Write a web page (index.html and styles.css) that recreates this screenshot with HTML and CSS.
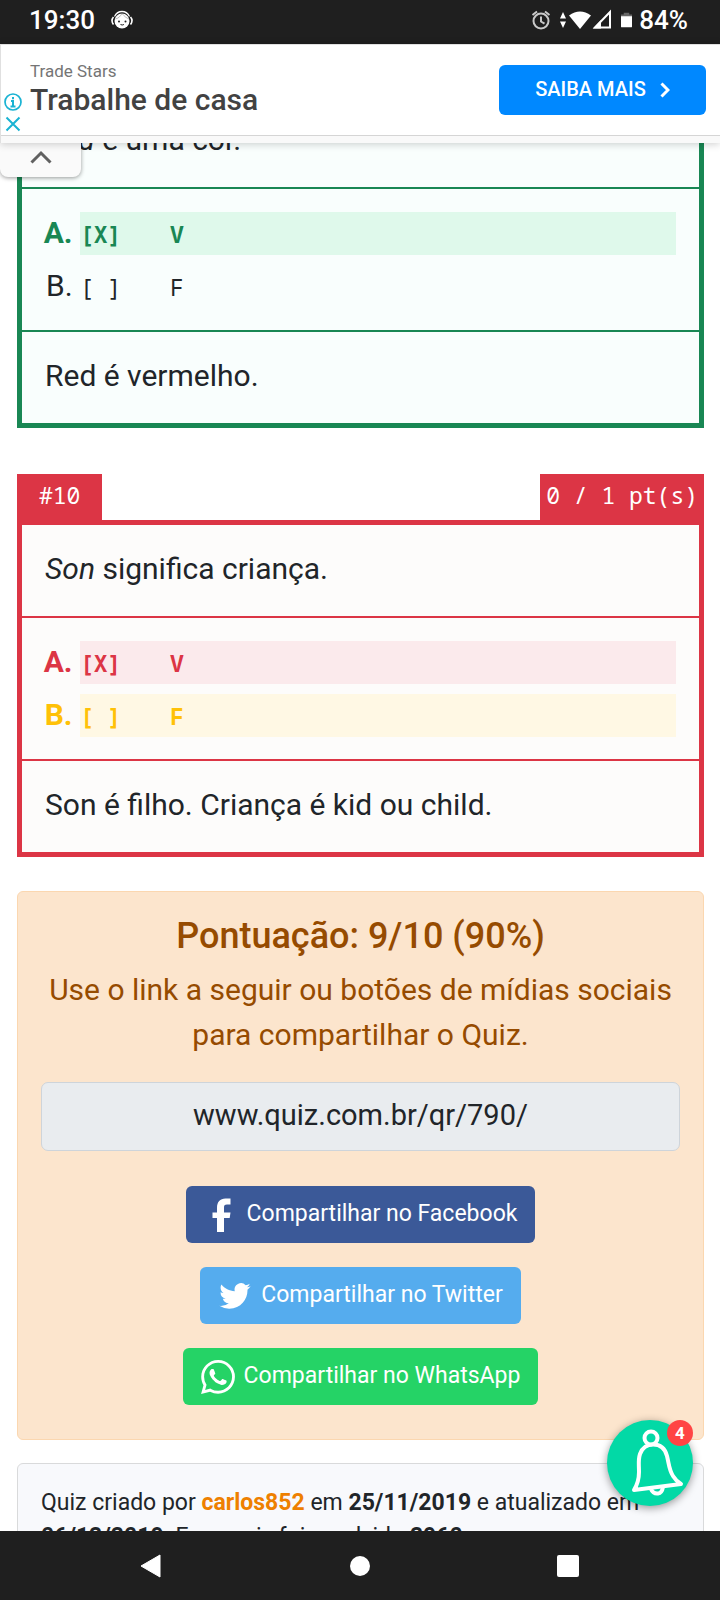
FILE: index.html
```html
<!DOCTYPE html>
<html lang="pt-BR">
<head>
<meta charset="utf-8">
<meta name="viewport" content="width=device-width, initial-scale=1">
<title>Quiz</title>
<link rel="stylesheet" href="styles.css">
</head>
<body>
<div class="screen">
  <header class="status">
    <div class="status-side">
      <time class="clock">19:30</time>
      <svg class="icon-face" viewBox="0 0 22 20" aria-hidden="true"><circle cx="11" cy="11" r="7.500" fill="#fff"/><path d="M2.500 14.500Q-.5 10.500 2.500 7M19.500 14.500Q22.500 10.500 19.500 7" fill="none" stroke="#fff" stroke-width="1.600"/><path d="M3.500 6.500Q6 1.500 11 1.500T18.500 6.500" fill="none" stroke="#fff" stroke-width="1.300"/><path d="M4.500 9C8 8 9.500 6 11 3.500 13.500 6.500 15.500 8 18 9" fill="none" stroke="#1f1f1f" stroke-width=".3"/><circle cx="8" cy="11.500" r="1" fill="#1f1f1f"/><circle cx="14.500" cy="11.500" r="1" fill="#1f1f1f"/><path d="M9.500 14.500q1.700 1 3.400 0" fill="none" stroke="#1f1f1f"/></svg>
    </div>
    <div class="status-side">
      <svg class="icon-alarm" viewBox="0 0 20 20" aria-hidden="true"><g fill="none" stroke="#c9c9c9" stroke-width="2"><circle cx="10" cy="11" r="7.500"/><path d="M1.500 5 6 1.500M18.500 5 14 1.500M10 6.500V11.500l3.500 2.200"/></g></svg>
      <svg class="icon-signal" viewBox="0 0 54 22" aria-hidden="true"><path d="M2 9.500 5 3l3 6.500zM2 12.500 5 19l3-6.500z" fill="#fff"/><path d="M11 6.500Q22 -1.500 33 6.500L22 20z" fill="#fff"/><path d="M37 18.500 52 3v15.500z" fill="none" stroke="#fff" stroke-width="2"/><path d="M35 19.500 43 11v8.500z" fill="#fff"/></svg>
      <svg class="icon-battery" viewBox="0 0 12 18" aria-hidden="true"><path d="M3 1h6v2h3v3H0V3h3z" fill="#666"/><path d="M0 5h12v11a1 1 0 0 1-1 1H1a1 1 0 0 1-1-1z" fill="#fff"/></svg>
      <span class="percent">84%</span>
    </div>
  </header>

  <aside class="ad">
    <div class="ad-marks">
      <svg class="ad-mark" viewBox="0 0 20 20" aria-hidden="true"><circle cx="10" cy="10" r="8" fill="none" stroke="#1ab3d3" stroke-width="1.700"/><path d="M10 5v2.200M8 9h2v5.500M7.500 14.500h5" fill="none" stroke="#1ab3d3" stroke-width="2"/></svg>
      <svg class="ad-mark" viewBox="0 0 20 20" aria-hidden="true"><path d="M3.500 3.500l13 13M16.500 3.500l-13 13" stroke="#1ab3d3" stroke-width="2"/></svg>
    </div>
    <div class="ad-copy">
      <p class="ad-brand">Trade Stars</p>
      <p class="ad-title">Trabalhe de casa</p>
    </div>
    <a class="ad-button" href="#">SAIBA MAIS
      <svg class="ad-arrow" viewBox="0 0 10 16" aria-hidden="true"><path d="M1.500 1.500 8 8l-6.500 6.500" fill="none" stroke="#fff" stroke-width="3"/></svg>
    </a>
  </aside>

  <div class="stage">
    <button class="collapse" type="button" aria-label="Recolher">
      <svg class="collapse-icon" viewBox="0 0 22 14" aria-hidden="true"><path d="M1.500 12.500 11 3l9.500 9.500" fill="none" stroke="#616161" stroke-width="3"/></svg>
    </button>

    <main class="page">
      <section class="question right">
        <div class="card">
          <p class="part"><em>Red</em> é uma cor.</p>
          <ol class="part answers" type="A">
            <li class="answer good"><span class="mono choice"><span class="tick">[X]</span>V</span></li>
            <li class="answer"><span class="mono choice"><span class="tick">[ ]</span>F</span></li>
          </ol>
          <p class="part">Red é vermelho.</p>
        </div>
      </section>

      <section class="question wrong">
        <div class="tabs mono">
          <span class="tab">#10</span>
          <span class="tab points">0 / 1 pt(s)</span>
        </div>
        <div class="card">
          <p class="part"><em>Son</em> significa criança.</p>
          <ol class="part answers" type="A">
            <li class="answer bad"><span class="mono choice"><span class="tick">[X]</span>V</span></li>
            <li class="answer missed"><span class="mono choice"><span class="tick">[ ]</span>F</span></li>
          </ol>
          <p class="part">Son é filho. Criança é kid ou child.</p>
        </div>
      </section>

      <section class="score">
        <h2 class="score-title">Pontuação: 9/10 (90%)</h2>
        <p class="score-text">Use o link a seguir ou botões de mídias sociais para compartilhar o Quiz.</p>
        <input class="link-box" type="text" readonly value="www.quiz.com.br/qr/790/" aria-label="Link do Quiz">
        <div class="shares">
          <a class="share facebook" href="#"><svg class="share-icon" viewBox="0 0 34 34" aria-hidden="true"><path d="M13 34V20H8.500v-5.500H13V10c0-6 3-9.500 8.500-9.500h5V6.500h-3.500c-2.500 0-3 1.200-3 3.200v4.800h6.500l-.8 5.500H20v14z" fill="#fff"/></svg><span class="share-label">Compartilhar no Facebook</span></a>
          <a class="share twitter" href="#"><svg class="share-icon" viewBox="-1 -1 26 26" aria-hidden="true"><path d="M23.950 4.570a10 10 0 0 1-2.820.77 4.960 4.960 0 0 0 2.160-2.720c-.95.550-2 .950-3.130 1.180a4.920 4.920 0 0 0-8.380 4.480C7.690 8.100 4.070 6.130 1.640 3.160a4.820 4.820 0 0 0-.67 2.480c0 1.710.87 3.210 2.190 4.100a4.900 4.900 0 0 1-2.230-.62v.06a4.920 4.920 0 0 0 3.950 4.830 5 5 0 0 1-2.210.08 4.940 4.940 0 0 0 4.600 3.420A9.870 9.870 0 0 1 0 19.540a13.990 13.990 0 0 0 7.550 2.210c9.050 0 14-7.500 14-13.980 0-.21 0-.42-.02-.63a9.940 9.940 0 0 0 2.460-2.550z" fill="#fff"/></svg><span class="share-label">Compartilhar no Twitter</span></a>
          <a class="share whatsapp" href="#"><svg class="share-icon" viewBox="0 0 24 24" aria-hidden="true"><path d="M17.470 14.380c-.3-.15-1.760-.87-2.030-.97-.27-.1-.47-.15-.67.150-.2.300-.77.970-.94 1.160-.17.200-.35.220-.64.080-.3-.15-1.260-.46-2.390-1.480-.88-.79-1.480-1.760-1.650-2.060-.17-.3-.02-.46.130-.61.130-.13.300-.35.450-.52.150-.17.200-.3.300-.5.100-.2.050-.37-.03-.52-.07-.15-.67-1.610-.92-2.210-.24-.58-.49-.5-.67-.51l-.57-.01c-.2 0-.52.070-.79.370-.27.300-1.040 1.020-1.040 2.480s1.070 2.880 1.210 3.070c.15.200 2.100 3.200 5.080 4.490.71.310 1.260.49 1.690.63.710.23 1.360.19 1.870.12.570-.09 1.760-.72 2.010-1.410.25-.69.250-1.290.17-1.410-.07-.13-.27-.2-.57-.35m-5.420 7.400h0a9.870 9.870 0 0 1-5.030-1.380l-.36-.21-3.740.98 1-3.650-.24-.37a9.860 9.860 0 0 1-1.510-5.260c0-5.450 4.440-9.880 9.890-9.880a9.830 9.830 0 0 1 9.880 9.890c0 5.450-4.440 9.880-9.890 9.880m8.410-18.300A11.820 11.820 0 0 0 12.050 0C5.500 0 .16 5.340.16 11.890c0 2.100.55 4.140 1.590 5.950L.06 24l6.300-1.650a11.880 11.880 0 0 0 5.690 1.450c6.550 0 11.890-5.340 11.890-11.890a11.820 11.820 0 0 0-3.480-8.430z" fill="#fff"/></svg><span class="share-label">Compartilhar no WhatsApp</span></a>
        </div>
      </section>

      <footer class="credits">Quiz criado por <a class="author" href="#">carlos852</a> em <b>25/11/2019</b> e atualizado em <b>06/12/2019</b>. Esse quiz foi resolvido <b>2960</b> vezes.</footer>
    </main>

    <button class="bell" type="button" aria-label="Notificações">
      <svg class="bell-icon" viewBox="0 0 86 86" aria-hidden="true"><g fill="none" stroke="#fff" stroke-width="4" stroke-linejoin="round"><circle cx="44" cy="18" r="6.500"/><path d="M27 70Q32 62 32 52C32 44 31 40 33 34 36 26 41 24.500 46 24.500 53 24.500 58 28 60 36 62 44 62 50 66 56Q69 61 74 64z"/><path d="M44 69Q46 74 51 73.500 55 73 56 67"/></g></svg>
      <span class="badge">4</span>
    </button>
  </div>

  <nav class="system-nav">
    <button class="nav-key" type="button" aria-label="Voltar"><svg class="nav-icon" viewBox="0 0 24 24" aria-hidden="true"><path d="M1 12 20 1v22z" fill="#fff" stroke="#fff" stroke-linejoin="round"/></svg></button>
    <button class="nav-key" type="button" aria-label="Início"><svg class="nav-icon" viewBox="0 0 24 24" aria-hidden="true"><circle cx="12" cy="12" r="10" fill="#fff"/></svg></button>
    <button class="nav-key" type="button" aria-label="Recentes"><svg class="nav-icon" viewBox="0 0 24 24" aria-hidden="true"><rect x="1" y="1" width="22" height="22" rx="2" fill="#fff"/></svg></button>
  </nav>
</div>
</body>
</html>
```
FILE: styles.css
```css
* { box-sizing: border-box; }

body {
  margin: 0;
  background: #fff;
  color: #212529;
  font-family: Roboto, "Liberation Sans", sans-serif;
  font-size: 30px;
  line-height: 45px;
}

p, h2, ol { margin: 0; }
button { border: 0; padding: 0; font: inherit; }
a { text-decoration: none; }
svg { display: block; flex: none; }

.mono {
  font-family: "Noto Sans Mono", "DejaVu Sans Mono", monospace;
  font-size: 23px;
}

.screen {
  display: flex;
  flex-direction: column;
  height: 100vh;
  overflow: hidden;
}

/* Status bar */
.status {
  display: flex;
  justify-content: space-between;
  align-items: center;
  height: 44px;
  padding: 0 32px 4px 29px;
  background: #1f1f1f;
  color: #fff;
  font-size: 26px;
  font-weight: 500;
  line-height: 40px;
}
.status-side { display: flex; align-items: center; }
.icon-face { width: 22px; height: 20px; margin-left: 16px; }
.icon-alarm { width: 20px; height: 20px; }
.icon-signal { width: 54px; height: 22px; margin-left: 7px; }
.icon-battery { width: 11px; height: 18px; margin: 0 7px 0 9px; }

/* Ad banner */
.ad {
  display: flex;
  align-items: center;
  height: 99px;
  padding: 0 14px 9px 2px;
  border-top: 1px solid #e0e0e0;
  border-left: 1px solid #e0e0e0;
  background: linear-gradient(#fff 90px, #d5d5d5 90px, #d5d5d5 91px, #f9f9f9 91px);
  box-shadow: 0 1px 8px rgba(0, 0, 0, .2);
  z-index: 1;
}
.ad-marks { align-self: flex-end; display: grid; gap: 2px; width: 20px; }
.ad-mark { width: 20px; height: 20px; }
.ad-copy { flex: 1; padding: 0 0 2px 7px; }
.ad-brand { color: #757575; font-size: 17px; line-height: 22px; }
.ad-title { color: #424242; font-size: 30px; font-weight: 500; line-height: 36px; }
.ad-button {
  display: flex;
  align-items: center;
  justify-content: center;
  gap: 14px;
  width: 207px;
  height: 50px;
  border-radius: 6px;
  background: #0088ff;
  color: #fff;
  font-size: 20px;
  font-weight: 500;
}
.ad-arrow { width: 10px; height: 16px; }

/* Scrolled page */
.stage { position: relative; flex: 1; min-height: 0; overflow: hidden; }
.collapse {
  position: absolute;
  top: 0;
  left: 0;
  display: grid;
  place-items: center;
  width: 81px;
  height: 34px;
  border-radius: 0 0 8px 8px;
  background: #fafafa;
  box-shadow: 0 1px 4px rgba(0, 0, 0, .4);
}
.collapse-icon { width: 22px; height: 14px; margin-bottom: 6px; }

.page { margin-top: -52px; padding: 0 16px 0 17px; }
.question { margin-bottom: 46px; }
.wrong { margin-bottom: 34px; }
.right { --tone: #198754; --fill: #f9fefd; }
.wrong { --tone: #dc3545; --fill: #fdfcfb; }
.card { border: 5px solid var(--tone); background: var(--fill); }
.part { padding: 21px 23px 25px; }
.part + .part { border-top: 2px solid var(--tone); }

.tabs { display: flex; justify-content: space-between; line-height: 42px; }
.tab { padding: 0 22px 4px; background: var(--tone); color: #fff; }
.points { padding: 0 6px 4px; }

.part.answers {
  display: grid;
  gap: 10px;
  padding: 23px 23px 22px 58px;
}
.answer { line-height: 41px; }
.choice { display: flex; }
.tick { width: 90px; }
.good, .bad, .missed { font-weight: 700; }
.good { background: #dff9eb; color: #198754; }
.bad { background: #fbeaec; color: #dc3545; }
.missed { background: #fff8e4; color: #ffc107; }

/* Score and sharing */
.score {
  padding: 22px 23px 34px;
  border: 1px solid #fbd7b0;
  border-radius: 6px;
  background: #fce5cd;
  color: #964b00;
  text-align: center;
}
.score-title { margin-bottom: 9px; font-size: 36px; font-weight: 500; line-height: 44px; }
.link-box {
  display: block;
  width: 100%;
  height: 69px;
  margin: 25px 0 35px;
  padding: 0 0 4px;
  border: 1px solid #ced4da;
  border-radius: 7px;
  background: #e9ecef;
  color: #212529;
  font: inherit;
  font-size: 29px;
  text-align: center;
}
.shares { display: flex; flex-direction: column; align-items: center; gap: 24px; }
.share {
  display: flex;
  align-items: center;
  gap: 9px;
  height: 57px;
  padding: 0 18px;
  border-radius: 6px;
  color: #fff;
  font-size: 23px;
}
.share-icon { width: 34px; height: 34px; }
.share-label { padding-bottom: 2px; }
.facebook { background: #3b5998; }
.twitter { background: #55acee; }
.whatsapp { background: #25d366; }

.credits {
  margin-top: 23px;
  padding: 22px 23px;
  border: 1px solid #d9dadb;
  border-radius: 6px;
  background: #f8f9fc;
  font-size: 23px;
  line-height: 34px;
}
.author { color: #ee8000; font-weight: 700; }

.bell {
  position: absolute;
  right: 27px;
  bottom: 25px;
  width: 86px;
  height: 86px;
  border-radius: 50%;
  background: #02d9a6;
  box-shadow: 0 2px 8px rgba(0, 0, 0, .4);
}
.bell-icon { width: 86px; height: 86px; }
.badge {
  position: absolute;
  top: 0;
  right: 0;
  width: 26px;
  height: 26px;
  border-radius: 50%;
  background: #ff4444;
  color: #fff;
  font-size: 17px;
  font-weight: 700;
  line-height: 26px;
}

/* System navigation */
.system-nav {
  display: flex;
  justify-content: center;
  gap: 184px;
  height: 69px;
  background: #1f1f1f;
}
.nav-key { display: grid; place-items: center; width: 24px; background: none; }
.nav-icon { width: 24px; height: 24px; }
```
